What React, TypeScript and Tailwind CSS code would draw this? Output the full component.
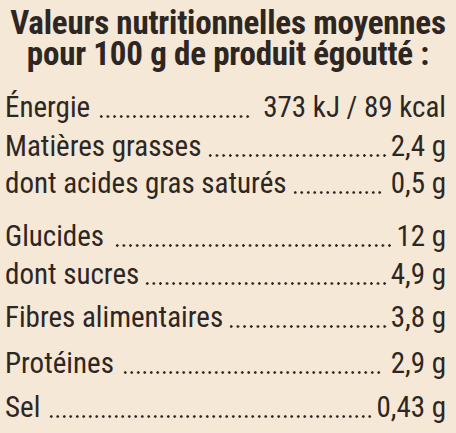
type Row = {
  label: string;
  value: string;
  top: string;
  before: string;
  after: string;
};

const rows: Row[] = [
  { label: "Énergie", value: "373 kJ / 89 kcal", top: "mt-[20px]", before: "ml-[8px]", after: "mr-[12px]" },
  { label: "Matières grasses", value: "2,4 g", top: "mt-[3px]", before: "ml-[6px]", after: "mr-[3px]" },
  { label: "dont acides gras saturés", value: "0,5 g", top: "mt-[1px]", before: "ml-[6px]", after: "mr-[8px]" },
  { label: "Glucides", value: "12 g", top: "mt-[17px]", before: "ml-[10px]", after: "mr-[3px]" },
  { label: "dont sucres", value: "4,9 g", top: "mt-[2px]", before: "ml-[5px]", after: "mr-[3px]" },
  { label: "Fibres alimentaires", value: "3,8 g", top: "mt-[7px]", before: "ml-[5px]", after: "mr-[3px]" },
  { label: "Protéines", value: "2,9 g", top: "mt-[10px]", before: "ml-[8px]", after: "mr-[9px]" },
  { label: "Sel", value: "0,43 g", top: "mt-[8px]", before: "ml-[8px]", after: "mr-[3px]" },
];

const NutritionRow = ({ row }: { row: Row }) => (
  <div className={`flex items-end h-[36px] leading-[36px] whitespace-nowrap ${row.top}`}>
    <span>{row.label}</span>
    <span
      className={`flex-1 h-[3px] mb-[7px] bg-[radial-gradient(circle,#2e2622_1.1px,transparent_1.5px)] bg-[length:6.5px_3px] bg-repeat-space ${row.before} ${row.after}`}
    />
    <span>{row.value}</span>
  </div>
);

export default function App() {
  return (
    <div className="w-[456px] h-[433px] overflow-hidden bg-[#f5e8d6] text-[#2e2622] font-['Roboto',sans-serif] pt-[7px]">
      <h1 className="text-center font-bold text-[33px] leading-[31px] tracking-[-0.2px] font-stretch-[75%] whitespace-nowrap">
        Valeurs nutritionnelles moyennes
        <br />
        pour 100 g de produit égoutté :
      </h1>
      <div className="pl-[5px] pr-[10px] text-[29px] font-stretch-[75%]">
        {rows.map((row) => (
          <NutritionRow key={row.label} row={row} />
        ))}
      </div>
    </div>
  );
}
